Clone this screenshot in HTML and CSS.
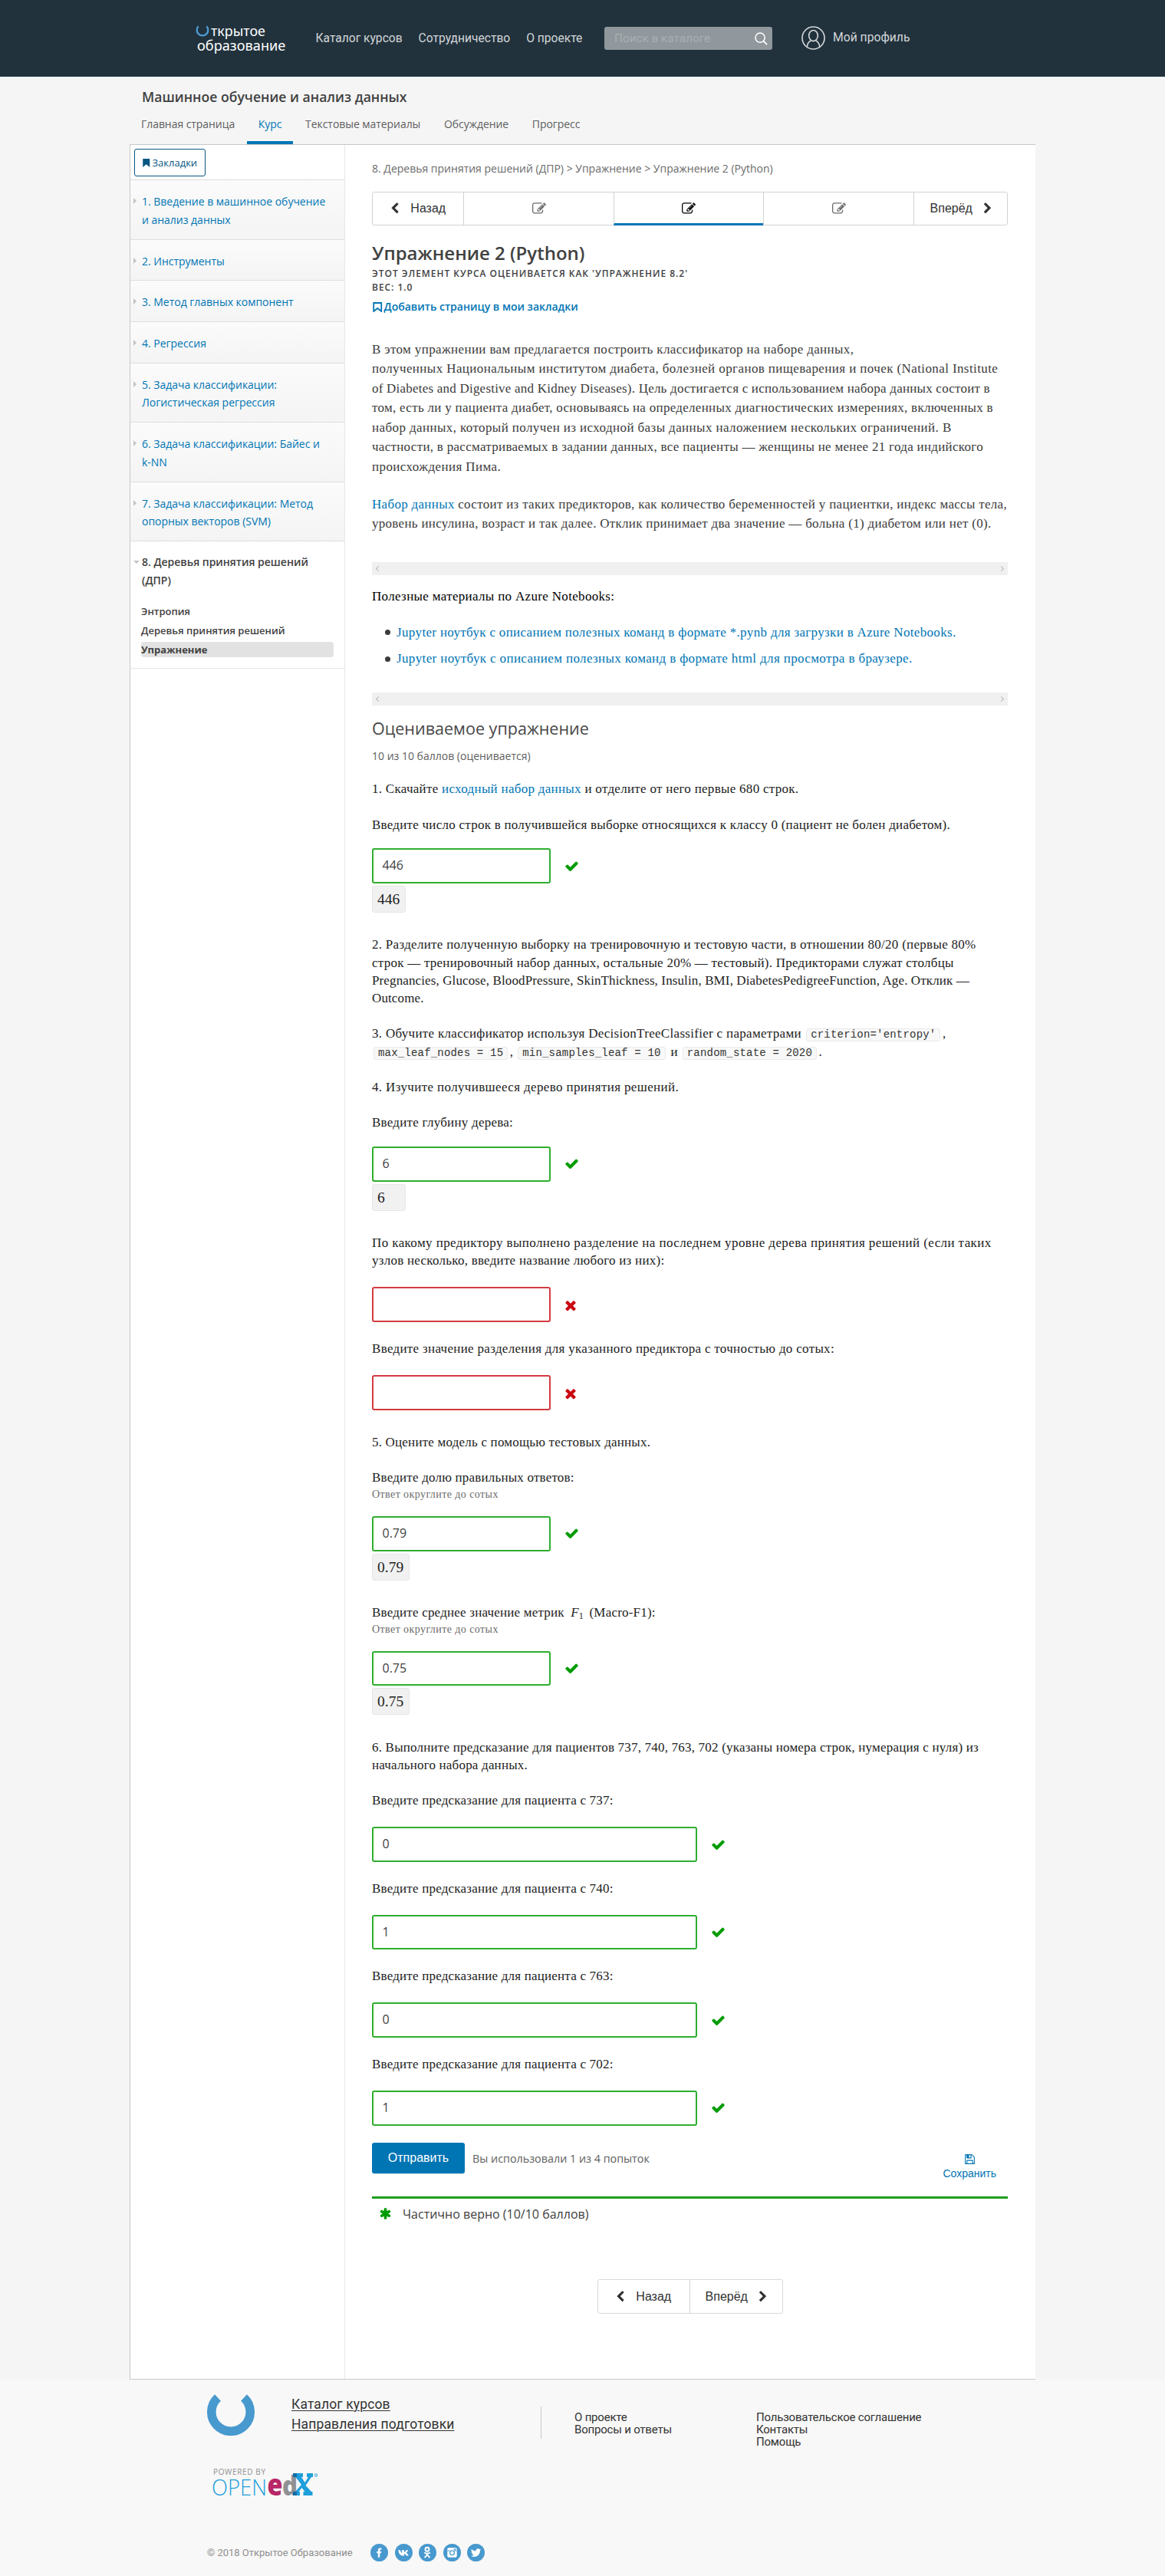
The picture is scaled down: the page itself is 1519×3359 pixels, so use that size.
FILE: index.html
```html
<!DOCTYPE html>
<html lang="ru">
<head>
<meta charset="utf-8">
<title>Упражнение 2 (Python) | Машинное обучение и анализ данных</title>
<link rel="stylesheet" href="styles.css">
</head>
<body>
<svg class="sprite" width="0" height="0" aria-hidden="true">
  <symbol id="check" viewBox="0 0 1792 1792"><path d="M1671 566q0 40-28 68l-724 724-136 136q-28 28-68 28t-68-28l-136-136-362-362q-28-28-28-68t28-68l136-136q28-28 68-28t68 28l294 295 656-657q28-28 68-28t68 28l136 136q28 28 28 68z"/></symbol>
  <symbol id="times" viewBox="0 0 1792 1792"><path d="M1490 1322q0 40-28 68l-136 136q-28 28-68 28t-68-28l-294-294-294 294q-28 28-68 28t-68-28l-136-136q-28-28-28-68t28-68l294-294-294-294q-28-28-28-68t28-68l136-136q28-28 68-28t68 28l294 294 294-294q28-28 68-28t68 28l136 136q28 28 28 68t-28 68l-294 294 294 294q28 28 28 68z"/></symbol>
  <symbol id="left" viewBox="0 0 1792 1792"><path d="M1427 301l-531 531 531 531q19 19 19 45t-19 45l-166 166q-19 19-45 19t-45-19l-742-742q-19-19-19-45t19-45l742-742q19-19 45-19t45 19l166 166q19 19 19 45t-19 45z"/></symbol>
  <symbol id="right" viewBox="0 0 1792 1792"><path d="M1363 877l-742 742q-19 19-45 19t-45-19l-166-166q-19-19-19-45t19-45l531-531-531-531q-19-19-19-45t19-45l166-166q19-19 45-19t45 19l742 742q19 19 19 45t-19 45z"/></symbol>
  <symbol id="edit" viewBox="0 0 1792 1792"><path d="M888 1184l116-116-152-152-116 116v56h96v96h56zm440-720q-16-16-33 1l-350 350q-17 17-1 33t33-1l350-350q17-17 1-33zm80 594v190q0 119-84.5 203.5t-203.5 84.5h-832q-119 0-203.5-84.5t-84.5-203.5v-832q0-119 84.5-203.5t203.5-84.5h832q63 0 117 25 15 7 18 23 3 17-9 29l-49 49q-14 14-32 8-23-6-45-6h-832q-66 0-113 47t-47 113v832q0 66 47 113t113 47h832q66 0 113-47t47-113v-126q0-13 9-22l64-64q15-15 35-7t20 29zm-96-738l288 288-672 672h-288v-288zm444 132l-92 92-288-288 92-92q28-28 68-28t68 28l152 152q28 28 28 68t-28 68z"/></symbol>
  <symbol id="save" viewBox="0 0 1792 1792"><path d="M512 1536h768v-384h-768v384zm896 0h128v-896q0-14-10-38.5t-20-34.5l-281-281q-10-10-34-20t-39-10v416q0 40-28 68t-68 28h-576q-40 0-68-28t-28-68v-416h-128v1280h128v-416q0-40 28-68t68-28h832q40 0 68 28t28 68v416zm-384-928v-320q0-13-9.500-22.500t-22.500-9.500h-192q-13 0-22.500 9.500t-9.500 22.500v320q0 13 9.500 22.500t22.500 9.500h192q13 0 22.500-9.500t9.500-22.500zm640 32v928q0 40-28 68t-68 28h-1344q-40 0-68-28t-28-68v-1344q0-40 28-68t68-28h928q40 0 88 20t76 48l280 280q28 28 48 76t20 88z"/></symbol>
  <symbol id="asterisk" viewBox="0 0 1792 1792"><path d="M1546 1050q46 26 59.5 77.500t-12.500 97.500l-64 110q-26 46-77.500 59.500t-97.500-12.500l-266-153v307q0 52-38 90t-90 38h-128q-52 0-90-38t-38-90v-307l-266 153q-46 26-97.500 12.500t-77.500-59.500l-64-110q-26-46-12.500-97.500t59.500-77.500l266-154-266-154q-46-26-59.500-77.500t12.500-97.500l64-110q26-46 77.500-59.500t97.500 12.500l266 153v-307q0-52 38-90t90-38h128q52 0 90 38t38 90v307l266-153q46-26 97.500-12.500t77.500 59.500l64 110q26 46 12.500 97.500t-59.500 77.500l-266 154z"/></symbol>
</svg>

<header class="top">
  <a class="brand">
    <span class="brand-row"><svg class="brand-ring" viewBox="0 0 18 15"><path d="M3.600 1.200A7.300 7.300 0 1 0 14.400 1.200" fill="none" stroke="#4a9bd0" stroke-width="2.400"/></svg><span class="brand-a">ткрытое</span></span>
    <span class="brand-b">образование</span>
  </a>
  <nav class="top-nav"><a>Каталог курсов</a><a>Сотрудничество</a><a>О проекте</a></nav>
  <div class="search"><span>Поиск в каталоге</span>
    <svg viewBox="0 0 18 18"><circle cx="7.500" cy="7.500" r="6.500" fill="none" stroke="#fff" stroke-width="1.600"/><path d="M12 12l5 5" stroke="#fff" stroke-width="1.800"/></svg>
  </div>
  <a class="profile">
    <svg viewBox="0 0 32 32" fill="none" stroke="#d3d6d8" stroke-width="1.700"><circle cx="16" cy="16" r="15"/><ellipse cx="16" cy="13" rx="6" ry="7.300"/><path d="M7.500 28c.5-5 3-7.500 5-8.500M24.500 28c-.5-5-3-7.500-5-8.500"/></svg>
    <span>Мой профиль</span>
  </a>
</header>

<div class="course-head">
  <h2>Машинное обучение и анализ данных</h2>
  <nav class="tabs"><a>Главная страница</a><a class="active">Курс</a><a>Текстовые материалы</a><a>Обсуждение</a><a>Прогресс</a></nav>
</div>

<div class="wrap">
  <aside class="side">
    <div class="bm-box"><a class="bm-btn"><svg viewBox="0 0 9 11"><path d="M0 0h9v11l-4.500-3.800L0 11z" fill="#065683"/></svg>Закладки</a></div>
    <a class="chapter"><span>1. Введение в машинное обучение<br>и анализ данных</span></a>
    <a class="chapter"><span>2. Инструменты</span></a>
    <a class="chapter"><span>3. Метод главных компонент</span></a>
    <a class="chapter"><span>4. Регрессия</span></a>
    <a class="chapter"><span>5. Задача классификации:<br>Логистическая регрессия</span></a>
    <a class="chapter"><span>6. Задача классификации: Байес и<br>k-NN</span></a>
    <a class="chapter"><span>7. Задача классификации: Метод<br>опорных векторов (SVM)</span></a>
    <a class="chapter open"><span>8. Деревья принятия решений<br>(ДПР)</span></a>
    <div class="sub"><a>Энтропия</a><a>Деревья принятия решений</a><a class="current">Упражнение</a></div>
  </aside>

  <main class="main">
    <div class="crumbs">8. Деревья принятия решений (ДПР) &gt; Упражнение &gt; Упражнение 2 (Python)</div>
    <div class="seq">
      <a class="seq-prev"><svg class="chev"><use href="#left"/></svg>Назад</a>
      <a class="seq-item"><svg><use href="#edit"/></svg></a>
      <a class="seq-item on"><svg><use href="#edit"/></svg></a>
      <a class="seq-item"><svg><use href="#edit"/></svg></a>
      <a class="seq-next">Вперёд<svg class="chev"><use href="#right"/></svg></a>
    </div>
    <h1>Упражнение 2 (Python)</h1>
    <div class="graded">Этот элемент курса оценивается как 'Упражнение 8.2'<br>Вес: 1.0</div>
    <a class="bm-add"><svg viewBox="0 0 12 13"><path d="M1 1h10v11l-5-4-5 4z" fill="none" stroke="#0075b4" stroke-width="1.800"/></svg>Добавить страницу в мои закладки</a>

    <div class="intro">
      <p><span class="tr36">В этом упражнении вам предлагается построить классификатор на наборе данных,</span><br>
      <span class="tr40">полученных Национальным институтом диабета, болезней органов пищеварения и почек (National Institute</span><br>
      <span class="tr22">of Diabetes and Digestive and Kidney Diseases). Цель достигается с использованием набора данных состоит в</span><br>
      <span class="tr29">том, есть ли у пациента диабет, основываясь на определенных диагностических измерениях, включенных в</span><br>
      <span class="tr40">набор данных, который получен из исходной базы данных наложением нескольких ограничений. В</span><br>
      <span class="tr29">частности, в рассматриваемых в задании данных, все пациенты — женщины не менее 21 года индийского</span><br>
      <span class="tr40">происхождения Пима.</span></p>
      <p><span class="tr31"><a>Набор данных</a> состоит из таких предикторов, как количество беременностей у пациентки, индекс массы тела,</span><br>
      <span class="tr29">уровень инсулина, возраст и так далее. Отклик принимает два значение — больна (1) диабетом или нет (0).</span></p>
    </div>
    <div class="hbar hbar-1"><i></i><i></i></div>
    <div class="materials">
      <p class="tr33">Полезные материалы по Azure Notebooks:</p>
      <ul>
        <li><a class="tr33">Jupyter ноутбук с описанием полезных команд в формате *.pynb для загрузки в Azure Notebooks.</a></li>
        <li><a class="tr36">Jupyter ноутбук с описанием полезных команд в формате html для просмотра в браузере.</a></li>
      </ul>
    </div>
    <div class="hbar hbar-2"><i></i><i></i></div>

    <h3>Оцениваемое упражнение</h3>
    <div class="score">10 из 10 баллов (оценивается)</div>

    <section class="problem">
      <p class="tr29">1. Скачайте <a>исходный набор данных</a> и отделите от него первые 680 строк.</p>
      <p class="tr25">Введите число строк в получившейся выборке относящихся к классу 0 (пациент не болен диабетом).</p>
      <div class="field near"><div class="box">446</div><svg class="ok"><use href="#check"/></svg></div>
      <div class="preview">446</div>

      <p class="after"><span class="tr29">2. Разделите полученную выборку на тренировочную и тестовую части, в отношении 80/20 (первые 80%</span><br>
      <span class="tr25">строк — тренировочный набор данных, остальные 20% — тестовый). Предикторами служат столбцы</span><br>
      <span class="tr12">Pregnancies, Glucose, BloodPressure, SkinThickness, Insulin, BMI, DiabetesPedigreeFunction, Age. Отклик —</span><br>
      <span class="tr12">Outcome.</span></p>
      <p><span class="tr31">3. Обучите классификатор используя DecisionTreeClassifier с параметрами</span> <code>criterion='entropy'</code>,<br>
      <code>max_leaf_nodes = 15</code>, <code>min_samples_leaf = 10</code> и <code>random_state = 2020</code>.</p>
      <p class="tr36">4. Изучите получившееся дерево принятия решений.</p>
      <p class="tr25">Введите глубину дерева:</p>
      <div class="field near"><div class="box">6</div><svg class="ok"><use href="#check"/></svg></div>
      <div class="preview">6</div>

      <p class="after"><span class="tr40">По какому предиктору выполнено разделение на последнем уровне дерева принятия решений (если таких</span><br>
      <span class="tr25">узлов несколько, введите название любого из них):</span></p>
      <div class="field"><div class="box bad"></div><svg class="no"><use href="#times"/></svg></div>
      <p class="tr31">Введите значение разделения для указанного предиктора с точностью до сотых:</p>
      <div class="field"><div class="box bad"></div><svg class="no"><use href="#times"/></svg></div>

      <p class="after tr20">5. Оцените модель с помощью тестовых данных.</p>
      <p class="tr20">Введите долю правильных ответов:</p>
      <small>Ответ округлите до сотых</small>
      <div class="field near"><div class="box">0.79</div><svg class="ok"><use href="#check"/></svg></div>
      <div class="preview">0.79</div>

      <p class="after tr20">Введите среднее значение метрик <em>F</em><sub>1</sub> (Macro-F1):</p>
      <small>Ответ округлите до сотых</small>
      <div class="field near"><div class="box">0.75</div><svg class="ok"><use href="#check"/></svg></div>
      <div class="preview">0.75</div>

      <p class="after tr20">6. Выполните предсказание для пациентов 737, 740, 763, 702 (указаны номера строк, нумерация с нуля) из<br>начального набора данных.</p>
      <p class="tr20">Введите предсказание для пациента с 737:</p>
      <div class="field"><div class="box wide">0</div><svg class="ok"><use href="#check"/></svg></div>
      <p class="tr20">Введите предсказание для пациента с 740:</p>
      <div class="field"><div class="box wide">1</div><svg class="ok"><use href="#check"/></svg></div>
      <p class="tr20">Введите предсказание для пациента с 763:</p>
      <div class="field"><div class="box wide">0</div><svg class="ok"><use href="#check"/></svg></div>
      <p class="tr20">Введите предсказание для пациента с 702:</p>
      <div class="field"><div class="box wide">1</div><svg class="ok"><use href="#check"/></svg></div>
    </section>

    <div class="action">
      <a class="submit">Отправить</a>
      <span class="attempts">Вы использовали 1 из 4 попыток</span>
      <a class="save"><svg><use href="#save"/></svg>Сохранить</a>
    </div>
    <div class="notice"><svg><use href="#asterisk"/></svg>Частично верно (10/10 баллов)</div>
    <div class="seq-bottom">
      <a class="seq-prev"><svg class="chev"><use href="#left"/></svg>Назад</a>
      <a class="seq-next">Вперёд<svg class="chev"><use href="#right"/></svg></a>
    </div>
  </main>
</div>

<footer class="foot">
  <div class="foot-top">
    <svg class="foot-ring" viewBox="0 0 62 54"><path d="M14 4.500A25.200 25.200 0 1 0 48 4.500" fill="none" stroke="#4799ce" stroke-width="11.600"/></svg>
    <div class="foot-main"><a>Каталог курсов</a><a>Направления подготовки</a></div>
    <div class="foot-sep"></div>
    <div class="foot-col col-a"><a>О проекте</a><a>Вопросы и ответы</a></div>
    <div class="foot-col"><a>Пользовательское соглашение</a><a>Контакты</a><a>Помощь</a></div>
  </div>
  <svg class="edx" viewBox="0 0 140 40">
    <text x="2" y="8.500" textLength="68" font-size="10" fill="#8f9194">POWERED BY</text>
    <text x="0" y="36" textLength="72" lengthAdjust="spacingAndGlyphs" font-size="29" font-weight="300" fill="#1f9fdb">OPEN</text>
    <text x="92" y="36" textLength="20" lengthAdjust="spacingAndGlyphs" font-size="36" font-weight="800" fill="#8f9194">d</text>
    <text x="72.500" y="36" textLength="20" lengthAdjust="spacingAndGlyphs" font-size="38" font-weight="800" fill="#b72667">e</text>
    <path d="M106 7h13v5h-2l4.500 7 4.500-7h-2V7h8v5h-2l-7.500 11 7.500 8h1.500v5h-12v-5h2l-4-5-4 5h1.500v5H106v-5h3l8-9-7.500-10H106z" fill="#1f9fdb"/>
    <path d="M106 7h5v5h-5zM106 31h5v5h-5z" fill="#126ca8"/>
    <circle cx="136" cy="9.500" r="1.700" fill="none" stroke="#1f9fdb"/>
  </svg>
  <div class="foot-bottom">
    <span class="copy">© 2018 Открытое Образование</span>
    <div class="social">
      <svg viewBox="0 0 24 24"><circle cx="12" cy="12" r="12"/><path fill="#fff" d="M10.300 18.500v-5.700H8.600v-2.400h1.700V8.700c0-2 1.200-2.900 2.900-2.900h1.700v2.300h-1c-.8 0-1.100.4-1.100 1v1.300h2.100l-.3 2.400h-1.800v5.700z"/></svg>
      <svg viewBox="0 0 24 24"><circle cx="12" cy="12" r="12"/><path fill="#fff" d="M4.500 8.500h2.600c.6 2 1.500 3.500 2.400 3.900V8.500h3v3.100c1.100-.3 2-1.600 2.600-3.100h2.800c-.4 1.600-1.400 2.900-2.600 3.800 1.300.8 2.500 2 3.200 4h-3c-.5-1.400-1.600-2.500-3-2.800v2.800h-1.200c-4 0-6.300-2.800-6.800-7.800z"/></svg>
      <svg viewBox="0 0 24 24"><circle cx="12" cy="12" r="12"/><g fill="none" stroke="#fff" stroke-width="2"><circle cx="11.500" cy="7.500" r="2.600"/><path d="M7.500 12q4 2.600 8 0M8 18.800l3.500-4 3.500 4"/></g></svg>
      <svg viewBox="0 0 24 24"><circle cx="12" cy="12" r="12"/><rect x="5.500" y="5.500" width="13" height="13" rx="2" fill="#fff"/><path d="M5.500 9.500h3.500M15 9.500h3.500" stroke="#4799ce"/><rect x="14.500" y="6.700" width="2.500" height="2" fill="#4799ce"/><circle cx="12" cy="12.200" r="3" fill="#fff" stroke="#4799ce" stroke-width="1.300"/></svg>
      <svg viewBox="0 0 24 24"><circle cx="12" cy="12" r="12"/><path fill="#fff" transform="translate(4.200 4.200) scale(.0088)" d="M1684 408q-67 98-162 167 1 14 1 42 0 130-38 259.500t-115.500 248.500-184.500 210.500-258 146-323 54.500q-271 0-496-145 35 4 78 4 225 0 401-138-105-2-188-64.500t-114-159.500q33 5 61 5 43 0 85-11-112-23-185.500-111.500t-73.500-205.500v-4q68 38 146 41-66-44-105-115t-39-154q0-88 44-163 121 149 294.500 238.500t371.500 99.500q-8-38-8-74 0-134 94.500-228.500t228.500-94.500q140 0 236 102 109-21 205-78-37 115-142 178 93-10 186-50z"/></svg>
    </div>
  </div>
</footer>
</body>
</html>
```
FILE: styles.css
```css
*, *::before { box-sizing: border-box; }
body { margin: 0; background: #f5f5f5; font-family: "Open Sans", sans-serif; color: #414141; white-space: nowrap; }
.sprite { display: block; height: 0; }
svg { flex: none; }
a { color: inherit; text-decoration: none; }
h1, h2, h3, p, ul { margin: 0; padding: 0; }

/* header */
.top { height: 100px; background: #21323d; display: flex; align-items: flex-start; padding-left: 255px; font-family: Roboto, sans-serif; color: #d3d6d8; }
.brand { width: 156.500px; padding-top: 28px; font-family: "Noto Sans", sans-serif; color: #fff; }
.brand-row { display: flex; height: 19px; }
.brand-ring { width: 18px; height: 15px; margin-top: 5px; }
.brand-a { font-size: 17.900px; line-height: 24px; margin-left: 2px; }
.brand-b { display: block; font-size: 18.200px; line-height: 24px; margin-left: 2px; }
.top-nav { display: flex; gap: 21px; width: 376.500px; padding-top: 38px; font-size: 15.600px; line-height: 24px; }
.search { display: flex; justify-content: space-between; align-items: center; width: 219px; height: 30px; margin-top: 35px; padding: 0 6px 0 13px; background: #90989d; border-radius: 3px; font-size: 15.300px; color: #a9afb2; }
.search svg { width: 17px; height: 17px; }
.profile { display: flex; align-items: center; gap: 10px; margin: 34px 0 0 38px; height: 31px; font-size: 15.700px; }
.profile svg { width: 31px; height: 31px; }
.profile span { padding-bottom: 2px; }

/* course header */
.course-head { height: 88px; padding-left: 185px; }
.course-head h2 { font-size: 17.600px; font-weight: 600; line-height: 26px; padding-top: 13px; color: #414141; }
.tabs { display: flex; gap: .7px; margin-left: -16px; height: 49px; font-size: 14px; line-height: 20px; letter-spacing: -.06px; color: #5e5e5e; }
.tabs a { padding: 13px 15px 0; height: 49px; }
.tabs .active { color: #0075b4; border-bottom: 4px solid #0075b4; }

/* layout */
.wrap { display: flex; width: 1181px; height: 2915px; margin-left: 169px; background: #fff; border: solid #c8c8c8; border-width: 1px 0 1px 1px; }
.side { flex: none; width: 280px; border-right: 1px solid #e7e7e7; }
.main { flex: 1; min-width: 0; padding: 21px 36px 0 35px; }

/* sidebar */
.bm-box { height: 46px; padding: 5px; border-bottom: 1px solid #dcdcdc; }
.bm-btn { display: flex; align-items: center; gap: 3px; width: 93px; height: 36px; padding-left: 10px; border: 1px solid #065683; border-radius: 3px; font-size: 13px; color: #065683; }
.bm-btn svg { width: 9.500px; height: 11px; }
.chapter { display: flex; gap: 7px; padding: 16px 0 0 4px; height: 53.700px; font-size: 14px; line-height: 23.500px; letter-spacing: -.02px; color: #0075b4; background: linear-gradient(#fbfbfb, #f4f4f4); border-bottom: 1px solid #dfdfdf; }
.chapter:has(br) { height: 77.500px; }
.chapter::before { content: ""; margin-top: 7px; width: 4px; height: 8px; border: solid transparent; border-width: 4px 0 4px 4px; border-left-color: #c4c4c4; }
.chapter.open { background: #fff; border: 0; padding-top: 15px; color: #414141; font-weight: 600; height: 79px; }
.chapter.open::before { width: 8px; height: 4px; margin-top: 10px; margin-right: -4px; border-width: 4px 4px 0; border-color: #c4c4c4 transparent transparent; }
.sub { padding: 2px 14px 0; border-bottom: 1px solid #e7e7e7; font-size: 13px; font-weight: 600; line-height: 20px; height: 87px; }
.sub a { display: block; height: 20px; margin-bottom: 5px; }
.sub .current { background: #e2e2e2; border-radius: 4px; font-weight: 700; }

/* unit header */
.crumbs { font-size: 14px; line-height: 20px; color: #6b6b6b; }
.seq { display: grid; grid-template-columns: 118px 196px 195px 196px 122px; height: 44px; margin-top: 20px; border: 1px solid #d2d2d2; border-radius: 3px; font: 16px "Liberation Sans", sans-serif; color: #313131; }
.seq a { display: flex; align-items: center; justify-content: center; }
.seq-item, .seq-next { border-left: 1px solid #d2d2d2; }
.seq-item svg { width: 18px; height: 18px; fill: #6a6a6a; }
.seq-item.on { border-bottom: 3px solid #0075b4; margin-bottom: -1px; }
.seq-item.on svg { fill: #000; margin-top: 2px; }
.chev { width: 15.500px; height: 15.500px; fill: #313131; }
.seq .seq-prev, .seq-bottom .seq-prev { gap: 13px; padding-right: 2px; }
.seq .seq-next, .seq-bottom .seq-next { gap: 12px; padding-left: 3px; }
h1 { font-size: 24px; font-weight: 600; line-height: 30px; margin-top: 21px; }
.graded { margin-top: 2.500px; font-size: 12px; font-weight: 600; line-height: 18px; letter-spacing: .97px; text-transform: uppercase; }
.bm-add { display: flex; align-items: center; gap: 2px; margin: 6.500px 0 0 1px; font-size: 14px; font-weight: 600; line-height: 20px; color: #0075b4; }
.bm-add svg { width: 12.500px; height: 13px; }

/* serif text */
.intro, .materials, .problem { font-family: "Liberation Serif", serif; font-size: 17px; }
.intro p a, .materials li a, .problem p a { color: #0075b4; }
.intro { padding-top: 32.500px; line-height: 25.600px; color: #3c3c3c; }
.intro p + p { margin-top: 23px; }
.hbar { display: flex; justify-content: space-between; align-items: center; height: 17px; padding: 0 6px; background: #f0f0f0; }
.hbar-1 { margin-top: 37px; }
.hbar-2 { margin-top: 31px; }
.hbar i { width: 5px; height: 5px; border: solid #b9b9b9; border-width: 0 0 1.500px 1.500px; transform: rotate(45deg); }
.hbar i + i { transform: rotate(225deg); }
.materials { padding-top: 15.500px; line-height: 25.600px; }
.materials p { color: #000; }
.materials ul { list-style: none; padding: 21px 0 0 17px; }
.materials li { display: flex; align-items: center; gap: 8px; margin-bottom: 8.800px; height: 25.600px; }
.materials li:last-child { margin-bottom: 0; }
.materials li::before { content: ""; width: 7px; height: 7px; border-radius: 50%; background: #3c3c3c; }
.tr12 { letter-spacing: .12px; }
.tr20 { letter-spacing: .2px; }
.tr22 { letter-spacing: .22px; }
.tr25 { letter-spacing: .25px; }
.tr29 { letter-spacing: .29px; }
.tr31 { letter-spacing: .305px; }
.tr33 { letter-spacing: .325px; }
.tr36 { letter-spacing: .365px; }
.tr40 { letter-spacing: .4px; }

/* problem */
h3 { margin-top: 15px; font-size: 21.550px; font-weight: 400; line-height: 30px; color: #474747; }
.score { margin-top: 11.500px; font-size: 14px; line-height: 20px; color: #5e5e5e; }
.problem { padding-top: 21px; line-height: 23.300px; color: #222; }
.problem p + p { margin-top: 22.900px; }
.problem .after { margin-top: 30.100px; }
.problem small { display: block; font-size: 14px; line-height: 21px; letter-spacing: .42px; color: #6b6b6b; }
.problem code { display: inline-block; height: 17px; padding: 0 5px; margin: 0 2.500px 0 2px; border: 1px solid #eaeaea; border-radius: 3px; background: #f8f8f8; font: 14px/15px "Liberation Mono", monospace; letter-spacing: .19px; color: #333; }
.problem em { font-size: 17px; line-height: 1; margin-left: 4px; }
.problem sub { font-size: 12px; line-height: 1; vertical-align: -3px; margin-right: 3px; }
.field { display: flex; align-items: center; gap: 18px; margin: 22.800px 0 22.700px; }
.field.near { margin: 19.500px 0 0; }
small + .field.near { margin-top: 17.700px; }
.box { width: 233px; height: 45.800px; padding: 0 11.500px; border: 2px solid #2fae2f; border-radius: 3px; background: #fff; font: 16px/41px "Open Sans", sans-serif; color: #414141; }
.box.bad { border-color: #d43b41; }
.box.wide { width: 423.500px; }
.ok { width: 19px; height: 19px; fill: #009b00; }
.no { width: 20px; height: 20px; margin: 2px 0 0 -2px; fill: #cb0712; }
.preview { display: inline-block; vertical-align: top; min-width: 44px; height: 35px; margin-top: 3px; padding: 0 7px 0 6px; border: 1px solid #e6e6e6; border-radius: 3px; background: #f1f1f1; font-size: 19.500px; line-height: 33px; }

.action { display: flex; height: 70px; }
.submit { width: 121px; height: 40px; border-radius: 3px; background: #0075b4; color: #fff; font: 16px/40px "Liberation Sans", sans-serif; text-align: center; box-shadow: 0 1px 0 #c3dcea; }
.attempts { flex: 1; margin: 11px 0 0 10px; font-size: 14.350px; line-height: 20px; color: #5e5e5e; }
.save { display: flex; flex-direction: column; align-items: center; gap: 2px; padding: 14px 15px 0 0; font: 14px/18px "Liberation Sans", sans-serif; color: #0075b4; }
.save svg { width: 15px; height: 15px; fill: #0075b4; }
.notice { display: flex; gap: 14px; padding: 8px 0 0 9px; border-top: 3px solid #1f9f1f; font-size: 16px; line-height: 24px; }
.notice svg { width: 17px; height: 17px; margin-top: 3px; fill: #009b00; }
.seq-bottom { display: flex; width: 242px; height: 45px; margin: 73px auto 0; border: 1px solid #d9d9d9; border-radius: 3px; font: 16px "Liberation Sans", sans-serif; color: #313131; }
.seq-bottom a { display: flex; align-items: center; justify-content: center; flex: 1; }
.seq-bottom .seq-prev { flex: none; width: 119px; }

/* footer */
.foot { height: 256px; padding-left: 270px; background: #f8f8f8; font-family: Roboto, sans-serif; color: #333; }
.foot-top { display: flex; padding-top: 19px; height: 115px; }
.foot-ring { width: 62px; height: 54px; }
.foot-main { width: 325px; padding: 1px 0 0 48px; font-size: 17.500px; line-height: 25.500px; letter-spacing: .13px; }
.foot-main a { display: block; text-decoration: underline; text-underline-offset: 2px; text-decoration-thickness: 1px; }
.foot-sep { width: 1px; height: 42px; margin: 16px 0 0 48px; background: #c8c8c8; }
.foot-sep { margin-left: 48px; }
.foot-main { flex: none; }
.foot-col { padding-top: 21.500px; font-size: 15px; line-height: 16px; letter-spacing: -.2px; }
.foot-col a { display: block; }
.col-a { width: 280px; padding-left: 43px; }
.edx { display: block; width: 140px; height: 40px; margin-left: 6px; overflow: visible; font-family: "Open Sans", sans-serif; }
.foot-bottom { display: flex; align-items: center; margin-top: 58px; height: 24px; }
.copy { width: 213px; font-size: 13px; letter-spacing: -.01px; color: #8f8f8f; }
.social { display: flex; gap: 8.500px; }
.social svg { width: 23px; height: 23px; fill: #4799ce; }
```
